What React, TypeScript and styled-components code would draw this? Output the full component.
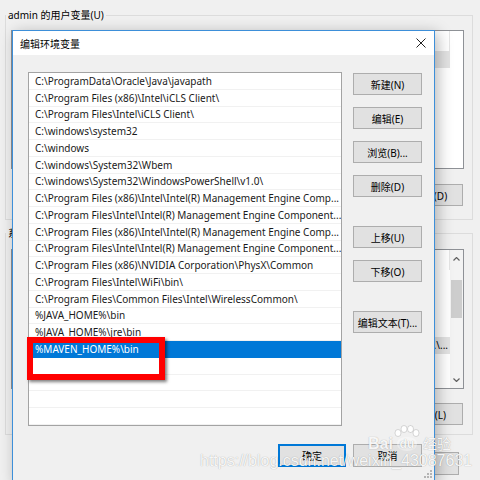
import React from "react";
import styled, { createGlobalStyle } from "styled-components";

const UI_FONT = `"Noto Sans", "Noto Sans CJK SC", sans-serif`;

const GlobalStyle = createGlobalStyle`
  html, body { margin: 0; padding: 0; background: #f0f0f0; }
  body { font-family: ${UI_FONT}; }
  * { box-sizing: border-box; }
`;

const Screen = styled.div`
  position: relative;
  width: 480px;
  height: 480px;
  overflow: hidden;
  background: #f0f0f0;
  font-family: ${UI_FONT};
  font-size: 10px;
  color: #000;
`;

/* ---------- parent window (behind) ---------- */

const ParentWindow = styled.div`
  display: flex;
  flex-direction: column;
  padding: 0 7px 0 5px;
`;

const GroupBox = styled.fieldset<{ $mt: number; $pad: string }>`
  margin: ${(p) => p.$mt}px 0 0 0;
  padding: ${(p) => p.$pad};
  border: 1px solid #dcdcdc;
  min-width: 0;
  display: flex;
  flex-direction: column;
`;

const GroupLegend = styled.legend`
  font-size: 10px;
  line-height: 14px;
  padding: 0 2px;
  margin-left: -5px;
  color: #000;
`;

const ListView = styled.div<{ $h: number }>`
  height: ${(p) => p.$h}px;
  border: 1px solid #8e9196;
  background: #fff;
  display: flex;
  overflow: hidden;
`;

const ListViewBody = styled.div<{ $gutter: number }>`
  flex: 1;
  min-width: 0;
  display: flex;
  flex-direction: column;
  margin-right: ${(p) => p.$gutter}px;
`;

const ListViewHeader = styled.div`
  height: 20px;
  flex: none;
  display: flex;
  align-items: center;
`;

const HeaderCell = styled.div<{ $w?: number }>`
  width: ${(p) => (p.$w ? `${p.$w}px` : "auto")};
  flex: ${(p) => (p.$w ? "none" : "1")};
  border-right: 1px solid #e5e5e5;
  height: 100%;
`;

const ListViewRow = styled.div<{ $selected?: boolean }>`
  height: 16.75px;
  flex: none;
  display: flex;
  align-items: center;
  white-space: nowrap;
  background: ${(p) => (p.$selected ? "#e3e3e3" : "transparent")};
`;

const ValueCell = styled.div`
  flex: 1;
  min-width: 0;
  overflow: hidden;
  text-align: right;
  padding-right: 2px;
`;

const Scrollbar = styled.div`
  width: 13px;
  flex: none;
  display: flex;
  flex-direction: column;
  background: #f3f3f3;
`;

const ScrollArrow = styled.div`
  height: 17px;
  flex: none;
  display: flex;
  align-items: center;
  justify-content: center;
`;

const ScrollTrack = styled.div<{ $offset: number }>`
  flex: 1;
  padding: ${(p) => p.$offset}px 1px 0 1px;
`;

const ScrollThumb = styled.div<{ $h: number }>`
  height: ${(p) => p.$h}px;
  background: #cdcdcd;
`;

const ParentButtonRow = styled.div<{ $mt: number; $pr: number }>`
  display: flex;
  justify-content: flex-end;
  gap: 7px;
  margin-top: ${(p) => p.$mt}px;
  padding-right: ${(p) => p.$pr}px;
`;

const WinButton = styled.button<{ $w: number; $h?: number; $default?: boolean }>`
  width: ${(p) => p.$w}px;
  height: ${(p) => p.$h ?? 22}px;
  flex: none;
  padding: 0;
  margin: 0;
  background: #e1e1e1;
  border: ${(p) => (p.$default ? "2px solid #0078d7" : "1px solid #adadad")};
  font-family: ${UI_FONT};
  font-size: 10px;
  color: #000;
  display: flex;
  align-items: center;
  justify-content: center;
  white-space: nowrap;
`;

/* ---------- dialog ---------- */

const Dialog = styled.div`
  position: absolute;
  left: 12px;
  top: 30px;
  width: 423px;
  height: 452px;
  border: 1px solid #3d8fd9;
  background: #f0f0f0;
  box-shadow: 3px 3px 14px rgba(0, 0, 0, 0.28);
  display: flex;
  flex-direction: column;
`;

const TitleBar = styled.div`
  height: 24px;
  flex: none;
  background: #fff;
  display: flex;
  align-items: center;
  justify-content: space-between;
  padding: 0 8px 0 7px;
`;

const Title = styled.span`
  font-size: 10px;
  color: #000;
`;

const DialogBody = styled.div`
  display: flex;
  align-items: flex-start;
  padding: 17px 12px 0 15px;
`;

const PathList = styled.div`
  position: relative;
  flex: 1;
  min-width: 0;
  border: 1px solid #a3a3a3;
  background: #fff;
  display: flex;
  flex-direction: column;
`;

const PathRow = styled.div<{ $selected?: boolean }>`
  height: 16.75px;
  display: flex;
  align-items: center;
  padding-left: 6px;
  white-space: nowrap;
  overflow: hidden;
  border-bottom: 1px solid ${(p) => (p.$selected ? "#0078d7" : "#f1f1f1")};
  background: ${(p) => (p.$selected ? "#0078d7" : "#fff")};
  color: ${(p) => (p.$selected ? "#fff" : "#1a1a1a")};
`;

const Highlight = styled.div`
  position: absolute;
  left: -2px;
  top: 264px;
  width: 138px;
  height: 43px;
  border: 6px solid #ff0000;
  box-shadow: 2px 2px 3px rgba(0, 0, 0, 0.5);
  pointer-events: none;
`;

const ButtonColumn = styled.div`
  width: 69px;
  flex: none;
  margin-left: 11px;
  padding-top: 1px;
  display: flex;
  flex-direction: column;
  gap: 29px;
`;

const ButtonGroup = styled.div`
  display: flex;
  flex-direction: column;
  gap: 12px;
`;

const DialogFooter = styled.div`
  display: flex;
  justify-content: flex-end;
  gap: 7px;
  padding: 18px 12px 0 0;
`;

const Grip = styled.svg`
  position: absolute;
  right: 2px;
  bottom: 3px;
`;

/* ---------- watermarks ---------- */

const UrlWatermark = styled.div`
  position: absolute;
  left: 200px;
  top: 452px;
  font-family: "Liberation Sans", Arial, sans-serif;
  font-size: 16px;
  line-height: 18px;
  color: rgba(255, 255, 255, 0.92);
  text-shadow: 0 0 1px rgba(0, 0, 0, 0.35);
  white-space: nowrap;
  pointer-events: none;
`;

const BaiduMark = styled.div`
  position: absolute;
  left: 368px;
  top: 425px;
  display: flex;
  align-items: flex-end;
  gap: 1px;
  color: rgba(255, 255, 255, 0.92);
  text-shadow: 0 0 1px rgba(0, 0, 0, 0.35);
  pointer-events: none;
`;

const BaiText = styled.span`
  font-family: "Liberation Sans", Arial, sans-serif;
  font-weight: bold;
  font-size: 16px;
  line-height: 14px;
`;

const Paw = styled.span`
  display: inline-flex;
  flex-direction: column;
  align-items: center;
  width: 26px;
`;

const DuText = styled.span`
  font-family: "Liberation Sans", Arial, sans-serif;
  font-weight: bold;
  font-size: 12px;
  line-height: 14px;
  padding: 0 3px;
  border-radius: 45% 45% 50% 50%;
  background: rgba(255, 255, 255, 0.35);
`;

const JingYan = styled.span`
  font-family: "Noto Sans CJK SC", sans-serif;
  font-size: 14px;
  line-height: 15px;
  margin-left: 2px;
`;

const Chevron = ({ up }: { up?: boolean }) => (
  <svg width="7" height="4" viewBox="0 0 7 4">
    <polyline
      points={up ? "0.5,3.5 3.5,0.5 6.5,3.5" : "0.5,0.5 3.5,3.5 6.5,0.5"}
      fill="none"
      stroke="#606060"
      strokeWidth="1.2"
    />
  </svg>
);

const paths = [
  "C:\\ProgramData\\Oracle\\Java\\javapath",
  "C:\\Program Files (x86)\\Intel\\iCLS Client\\",
  "C:\\Program Files\\Intel\\iCLS Client\\",
  "C:\\windows\\system32",
  "C:\\windows",
  "C:\\windows\\System32\\Wbem",
  "C:\\windows\\System32\\WindowsPowerShell\\v1.0\\",
  "C:\\Program Files (x86)\\Intel\\Intel(R) Management Engine Comp...",
  "C:\\Program Files\\Intel\\Intel(R) Management Engine Component...",
  "C:\\Program Files (x86)\\Intel\\Intel(R) Management Engine Comp...",
  "C:\\Program Files\\Intel\\Intel(R) Management Engine Component...",
  "C:\\Program Files (x86)\\NVIDIA Corporation\\PhysX\\Common",
  "C:\\Program Files\\Intel\\WiFi\\bin\\",
  "C:\\Program Files\\Common Files\\Intel\\WirelessCommon\\",
  "%JAVA_HOME%\\bin",
  "%JAVA_HOME%\\jre\\bin",
  "%MAVEN_HOME%\\bin",
  "",
  "",
  "",
  "",
];
const SELECTED = 16;

/* rows of the parent lists: only the right edge peeks out from behind the dialog */
const userRows = [true, false, false];
const sysRows = ["", "", "", "", "C:\\...\\...", "", ""];

export default function App() {
  return (
    <Screen>
      <GlobalStyle />
      <ParentWindow>
        <GroupBox $mt={8} $pad="8px 8px 13px 5px">
          <GroupLegend>admin 的用户变量(U)</GroupLegend>
          <ListView $h={139}>
            <ListViewBody $gutter={13}>
              <ListViewHeader>
                <HeaderCell $w={150} />
                <HeaderCell />
              </ListViewHeader>
              {userRows.map((sel, i) => (
                <ListViewRow key={i} $selected={sel} />
              ))}
            </ListViewBody>
          </ListView>
          <ParentButtonRow $mt={15} $pr={1}>
            <WinButton $w={65}>删除(D)</WinButton>
          </ParentButtonRow>
        </GroupBox>

        <GroupBox $mt={6} $pad="9px 8px 9px 5px">
          <GroupLegend>系统变量(S)</GroupLegend>
          <ListView $h={140}>
            <ListViewBody $gutter={0}>
              <ListViewHeader>
                <HeaderCell $w={150} />
                <HeaderCell />
              </ListViewHeader>
              {sysRows.map((v, i) => (
                <ListViewRow key={i} $selected={i === 4}>
                  <ValueCell>{v}</ValueCell>
                </ListViewRow>
              ))}
            </ListViewBody>
            <Scrollbar>
              <ScrollArrow>
                <Chevron up />
              </ScrollArrow>
              <ScrollTrack $offset={13}>
                <ScrollThumb $h={38} />
              </ScrollTrack>
              <ScrollArrow>
                <Chevron />
              </ScrollArrow>
            </Scrollbar>
          </ListView>
          <ParentButtonRow $mt={14} $pr={1}>
            <WinButton $w={65}>删除(L)</WinButton>
          </ParentButtonRow>
        </GroupBox>

        <ParentButtonRow $mt={17} $pr={14}>
          <WinButton $w={69} $h={23} />
        </ParentButtonRow>
      </ParentWindow>

      <Dialog>
        <TitleBar>
          <Title>编辑环境变量</Title>
          <svg width="10" height="10" viewBox="0 0 10 10">
            <path d="M0.5 0.5 L9.5 9.5 M9.5 0.5 L0.5 9.5" stroke="#222" strokeWidth="1" />
          </svg>
        </TitleBar>
        <DialogBody>
          <PathList>
            {paths.map((p, i) => (
              <PathRow key={i} $selected={i === SELECTED}>
                {p}
              </PathRow>
            ))}
            <Highlight />
          </PathList>
          <ButtonColumn>
            <ButtonGroup>
              <WinButton $w={69}>新建(N)</WinButton>
              <WinButton $w={69}>编辑(E)</WinButton>
              <WinButton $w={69}>浏览(B)...</WinButton>
              <WinButton $w={69}>删除(D)</WinButton>
            </ButtonGroup>
            <ButtonGroup>
              <WinButton $w={69}>上移(U)</WinButton>
              <WinButton $w={69}>下移(O)</WinButton>
            </ButtonGroup>
            <ButtonGroup>
              <WinButton $w={69}>编辑文本(T)...</WinButton>
            </ButtonGroup>
          </ButtonColumn>
        </DialogBody>
        <DialogFooter>
          <WinButton $w={68} $h={23} $default>
            确定
          </WinButton>
          <WinButton $w={69} $h={23}>
            取消
          </WinButton>
        </DialogFooter>
        <Grip width="8" height="8" viewBox="0 0 8 8">
          {[
            [6, 0],
            [6, 3],
            [3, 3],
            [6, 6],
            [3, 6],
            [0, 6],
          ].map(([x, y]) => (
            <rect key={`${x}-${y}`} x={x} y={y} width="2" height="2" fill="#b4b4b4" />
          ))}
        </Grip>
      </Dialog>

      <BaiduMark>
        <BaiText>Bai</BaiText>
        <Paw>
          <svg width="26" height="12" viewBox="0 0 26 12">
            <ellipse cx="4" cy="8" rx="3" ry="3.5" fill="rgba(255,255,255,0.9)" stroke="rgba(0,0,0,0.18)" strokeWidth="0.8" />
            <ellipse cx="10" cy="4" rx="3" ry="3.5" fill="rgba(255,255,255,0.9)" stroke="rgba(0,0,0,0.18)" strokeWidth="0.8" />
            <ellipse cx="16.5" cy="4" rx="3" ry="3.5" fill="rgba(255,255,255,0.9)" stroke="rgba(0,0,0,0.18)" strokeWidth="0.8" />
            <ellipse cx="22" cy="8" rx="3" ry="3.5" fill="rgba(255,255,255,0.9)" stroke="rgba(0,0,0,0.18)" strokeWidth="0.8" />
          </svg>
          <DuText>du</DuText>
        </Paw>
        <JingYan>经验</JingYan>
      </BaiduMark>
      <UrlWatermark>https://blog.csdn.net/weixin_43087631</UrlWatermark>
    </Screen>
  );
}
